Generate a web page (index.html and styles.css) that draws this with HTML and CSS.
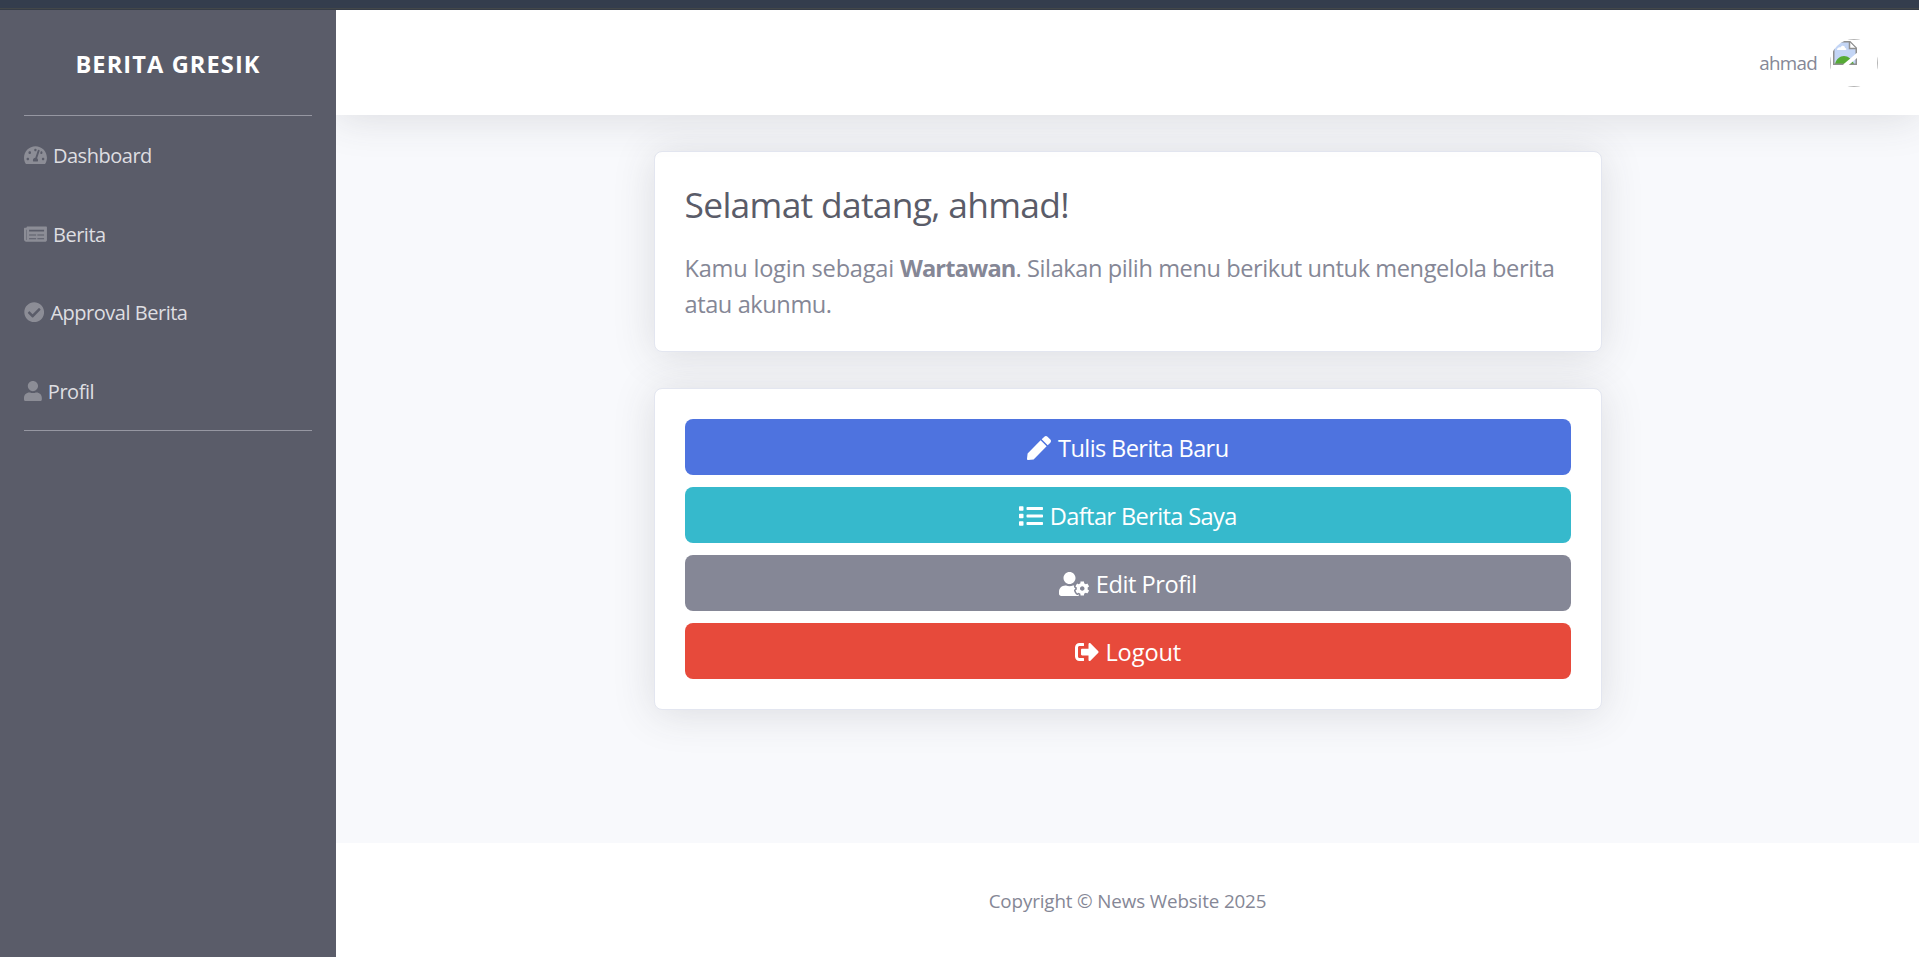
FILE: index.html
```html
<!DOCTYPE html>
<html lang="id">
<head>
<meta charset="utf-8">
<title>Berita Gresik</title>
<link rel="stylesheet" href="styles.css">
</head>
<body>
<div class="window-edge"></div>
<div class="wrapper">
  <aside class="sidebar">
    <a class="brand">BERITA GRESIK</a>
    <hr class="divider">
    <nav class="nav">
      <a class="nav-link"><svg class="fa fa-576" viewBox="0 0 576 512"><path d="M288 32C128.94 32 0 160.94 0 320c0 52.8 14.25 102.26 39.06 144.8 5.61 9.62 16.3 15.2 27.44 15.2h443c11.14 0 21.83-5.58 27.44-15.2C561.75 422.26 576 372.8 576 320c0-159.06-128.94-288-288-288zm0 64c14.71 0 26.58 10.13 30.32 23.65-1.11 2.26-2.64 4.23-3.45 6.67l-9.22 27.67c-5.13 3.49-10.97 6.01-17.64 6.01-17.67 0-32-14.33-32-32S270.33 96 288 96zM96 384c-17.67 0-32-14.33-32-32s14.33-32 32-32 32 14.33 32 32-14.33 32-32 32zm48-160c-17.67 0-32-14.33-32-32s14.33-32 32-32 32 14.33 32 32-14.33 32-32 32zm246.77-72.41l-61.33 184C343.13 347.33 352 364.54 352 384c0 11.72-3.38 22.55-8.88 32H232.88c-5.5-9.45-8.88-20.28-8.88-32 0-33.94 26.5-61.43 59.9-63.59l61.34-184.01c4.17-12.56 17.73-19.45 30.36-15.17 12.57 4.19 19.35 17.79 15.17 30.36zm14.66 57.2l15.52-46.55c3.47-1.29 7.13-2.23 11.05-2.23 17.67 0 32 14.33 32 32s-14.33 32-32 32c-11.38-.01-20.89-6.28-26.57-15.22zM480 384c-17.67 0-32-14.33-32-32s14.33-32 32-32 32 14.33 32 32-14.33 32-32 32z"/></svg><span>Dashboard</span></a>
      <a class="nav-link"><svg class="fa fa-576" viewBox="0 0 576 512"><path fill-rule="evenodd" d="M552 64H88c-13.255 0-24 10.745-24 24v8H24c-13.255 0-24 10.745-24 24v272c0 30.928 25.072 56 56 56h472c26.510 0 48-21.490 48-48V88c0-13.255-10.745-24-24-24zM52 400V144h12v256zM128 142h376v46H128zM128 264h176v24H128zM336 264h168v24H336zM128 356h176v24H128zM336 356h168v24H336z"/></svg><span>Berita</span></a>
      <a class="nav-link"><svg class="fa" viewBox="0 0 512 512"><path d="M504 256c0 136.967-111.033 248-248 248S8 392.967 8 256 119.033 8 256 8s248 111.033 248 248zM227.314 387.314l184-184c6.248-6.248 6.248-16.379 0-22.627l-22.627-22.627c-6.248-6.249-16.379-6.249-22.628 0L216 308.118l-70.059-70.059c-6.248-6.248-16.379-6.248-22.628 0l-22.627 22.627c-6.248 6.248-6.248 16.379 0 22.627l104 104c6.249 6.249 16.379 6.249 22.628.001z"/></svg><span>Approval Berita</span></a>
      <a class="nav-link"><svg class="fa fa-448" viewBox="0 0 448 512"><path d="M224 256c70.7 0 128-57.3 128-128S294.7 0 224 0 96 57.3 96 128s57.3 128 128 128zm89.6 32h-16.7c-22.2 10.2-46.9 16-72.9 16s-50.6-5.8-72.9-16h-16.7C60.2 288 0 348.2 0 422.4V464c0 26.5 21.5 48 48 48h352c26.5 0 48-21.5 48-48v-41.6c0-74.2-60.2-134.4-134.4-134.4z"/></svg><span>Profil</span></a>
    </nav>
    <hr class="divider">
  </aside>
  <div class="content">
    <header class="topbar">
      <span class="user-name">ahmad</span>
      <span class="avatar"><span class="avatar-frame"><svg class="broken" viewBox="0 0 24 24"><path d="M.75.75H17L23.250 7v16.250H.75z" fill="#c3d5f5"/><path d="M4 9c0-2 2-3 3.500-2.500C8.500 4 12 4.500 12 7c1.500 0 2 2 .5 2z" fill="#fff"/><path d="M2 23c1-5 5-8 9-8s8 3 10 8z" fill="#55aa35"/><path d="M.75.75H17L23.250 7v16.250H.75z" fill="none" stroke="#8f8f8f" stroke-width="1.500"/><path d="M16.500 1v6.500H23" fill="#fff" stroke="#8f8f8f" stroke-width="1.500"/><path d="M11.500 25L25 13.500" stroke="#fff" stroke-width="4"/></svg></span></span>
    </header>
    <main class="main">
      <section class="card">
        <h1 class="title">Selamat datang, ahmad!</h1>
        <p class="lead"><span class="intro">Kamu login sebagai </span><strong>Wartawan</strong>. Silakan pilih menu berikut untuk mengelola berita atau akunmu.</p>
      </section>
      <section class="card actions">
        <a class="btn primary"><svg class="fa" viewBox="0 0 512 512"><path d="M290.74 93.24l128.02 128.02-277.99 277.99-114.14 12.6C11.35 513.54-1.56 500.62.14 485.34l12.7-114.22 277.9-277.88zm207.2-19.06l-60.11-60.11c-18.75-18.75-49.16-18.75-67.91 0l-56.55 56.55 128.02 128.02 56.55-56.55c18.75-18.76 18.75-49.16 0-67.91z"/></svg><span>Tulis Berita Baru</span></a>
        <a class="btn info"><svg class="fa" viewBox="0 0 512 512"><path d="M80 368H16a16 16 0 0 0-16 16v64a16 16 0 0 0 16 16h64a16 16 0 0 0 16-16v-64a16 16 0 0 0-16-16zm0-320H16A16 16 0 0 0 0 64v64a16 16 0 0 0 16 16h64a16 16 0 0 0 16-16V64a16 16 0 0 0-16-16zm0 160H16a16 16 0 0 0-16 16v64a16 16 0 0 0 16 16h64a16 16 0 0 0 16-16v-64a16 16 0 0 0-16-16zm416 176H176a16 16 0 0 0-16 16v32a16 16 0 0 0 16 16h320a16 16 0 0 0 16-16v-32a16 16 0 0 0-16-16zm0-320H176a16 16 0 0 0-16 16v32a16 16 0 0 0 16 16h320a16 16 0 0 0 16-16V80a16 16 0 0 0-16-16zm0 160H176a16 16 0 0 0-16 16v32a16 16 0 0 0 16 16h320a16 16 0 0 0 16-16v-32a16 16 0 0 0-16-16z"/></svg><span>Daftar Berita Saya</span></a>
        <a class="btn secondary"><svg class="fa fa-640" viewBox="0 0 640 512"><path d="M610.5 373.3c2.600-14.100 2.600-28.500 0-42.600l25.800-14.900c3-1.700 4.300-5.200 3.300-8.500-6.700-21.600-18.200-41.200-33.200-57.400-2.300-2.500-6-3.100-9-1.400l-25.800 14.900c-10.900-9.300-23.400-16.500-36.900-21.300v-29.800c0-3.400-2.400-6.400-5.700-7.100-22.300-5-45-4.800-66.200 0-3.300.7-5.700 3.700-5.700 7.100v29.800c-13.500 4.800-26 12-36.900 21.300l-25.800-14.900c-2.900-1.700-6.700-1.100-9 1.400-15 16.200-26.500 35.800-33.200 57.400-1 3.300.4 6.800 3.300 8.500l25.800 14.900c-2.600 14.100-2.600 28.500 0 42.600l-25.800 14.900c-3 1.700-4.300 5.200-3.300 8.500 6.700 21.600 18.200 41.100 33.200 57.400 2.300 2.500 6 3.100 9 1.400l25.800-14.900c10.900 9.300 23.400 16.500 36.900 21.300v29.800c0 3.400 2.400 6.400 5.700 7.100 22.300 5 45 4.800 66.200 0 3.300-.7 5.700-3.700 5.700-7.100v-29.800c13.500-4.800 26-12 36.900-21.300l25.800 14.900c2.900 1.700 6.700 1.100 9-1.400 15-16.200 26.500-35.800 33.200-57.400 1-3.300-.4-6.800-3.300-8.500l-25.800-14.900zM496 400.500c-26.800 0-48.500-21.800-48.500-48.500s21.800-48.500 48.500-48.500 48.500 21.800 48.500 48.500-21.700 48.500-48.500 48.500zM224 256c70.700 0 128-57.300 128-128S294.700 0 224 0 96 57.300 96 128s57.300 128 128 128zm201.200 226.500c-2.300-1.200-4.600-2.600-6.800-3.900l-7.900 4.600c-6 3.400-12.800 5.300-19.600 5.300-10.900 0-21.400-4.600-28.900-12.600-18.300-19.800-32.300-43.900-40.200-69.600-5.500-17.700 1.900-36.400 17.900-45.700l7.900-4.600c-.1-2.600-.1-5.200 0-7.800l-7.900-4.600c-16-9.200-23.400-28-17.900-45.700.9-2.900 2.200-5.800 3.200-8.700-3.800-.3-7.500-1.200-11.400-1.200h-16.700c-22.200 10.200-46.900 16-72.900 16s-50.600-5.800-72.900-16h-16.700C60.200 288 0 348.200 0 422.400V464c0 26.500 21.500 48 48 48h352c10.100 0 19.500-3.200 27.200-8.500-1.200-3.800-2-7.700-2-11.800v-9.200z"/></svg><span>Edit Profil</span></a>
        <a class="btn danger"><svg class="fa" viewBox="0 0 512 512"><path d="M497 273L329 441c-15 15-41 4.500-41-17v-96H152c-13.300 0-24-10.700-24-24v-96c0-13.300 10.700-24 24-24h136V88c0-21.400 25.900-32 41-17l168 168c9.300 9.400 9.300 24.600 0 34zM192 436v-40c0-6.600-5.400-12-12-12H96c-17.700 0-32-14.300-32-32V160c0-17.700 14.300-32 32-32h84c6.600 0 12-5.400 12-12V76c0-6.600-5.400-12-12-12H96c-53 0-96 43-96 96v192c0 53 43 96 96 96h84c6.600 0 12-5.400 12-12z"/></svg><span>Logout</span></a>
      </section>
    </main>
    <footer class="footer">Copyright © News Website 2025</footer>
  </div>
</div>
</body>
</html>
```
FILE: styles.css
```css
* { box-sizing: border-box; }
body {
  margin: 0;
  height: 957px;
  display: flex;
  flex-direction: column;
  overflow: hidden;
  font-family: "Open Sans", "Noto Sans", sans-serif;
  font-size: 23.6px;
  line-height: 36px;
  color: #858796;
  background: #f8f9fc;
}
.window-edge {
  flex: none;
  height: 10px;
  background: #343d4d;
  border-bottom: 1px solid #363c46;
  box-shadow: inset 0 -1px #434749;
}
.wrapper { flex: 1; display: flex; min-height: 0; }
.sidebar { flex: none; width: 336px; background: #5a5c69; }
.brand {
  height: 105px;
  display: flex;
  align-items: center;
  justify-content: center;
  padding-top: 3px;
  color: #fff;
  font-size: 23.6px;
  font-weight: 700;
  letter-spacing: 1.1px;
}
.divider { margin: 0 24px; border: 0; height: 1px; background: #9697a2; }
.nav-link {
  display: flex;
  align-items: center;
  height: 78.6px;
  padding: 0 24px;
  gap: 6px;
  font-size: 20px;
  letter-spacing: -.48px;
  color: #dedee1;
}
.nav-link span { padding-top: 2px; }
.fa { width: 1em; height: 1em; fill: currentColor; flex: none; }
.fa-448 { width: .875em; }
.fa-576 { width: 1.125em; }
.fa-640 { width: 1.25em; }
.nav-link .fa { font-size: 20.4px; color: #8c8d96; }
.content { flex: 1; display: flex; flex-direction: column; min-width: 0; overflow: hidden; }
.topbar {
  position: relative;
  flex: none;
  height: 105px;
  display: flex;
  align-items: center;
  justify-content: flex-end;
  gap: 13px;
  padding-right: 41px;
  background: #fff;
  box-shadow: 0 3.6px 42px rgba(58, 59, 69, .15);
}
.user-name { font-size: 18.8px; letter-spacing: -.7px; padding-top: 1px; }
.avatar { width: 48px; height: 48px; border-radius: 50%; overflow: hidden; }
.avatar-frame { display: flex; width: 48px; height: 48px; border: 1px solid #b4b4b4; padding: 1px 2px; }
.broken { width: 24px; height: 24px; }
.main { flex: 1; display: flex; flex-direction: column; align-items: center; gap: 36px; padding-top: 36px; }
.card {
  width: 948px;
  padding: 30px;
  border: 1px solid #e3e6f0;
  border-radius: 8px;
  background: #fff;
  box-shadow: 0 3.6px 42px rgba(58, 59, 69, .15);
}
.title {
  margin: 0 0 24px;
  padding-top: 1px;
  font-size: 35.4px;
  line-height: 43px;
  font-weight: 400;
  letter-spacing: -.7px;
  color: #5a5c69;
}
.lead { margin: 0 0 -1px; letter-spacing: -.42px; }
.intro { letter-spacing: -.22px; }
.lead strong { letter-spacing: -.82px; }
.actions { display: flex; flex-direction: column; gap: 12px; }
.btn {
  height: 56px;
  display: flex;
  align-items: center;
  justify-content: center;
  gap: 6.6px;
  padding: 2px 0 0 1px;
  border-radius: 8px;
  letter-spacing: -.62px;
  color: #fff;
}
.btn .fa { font-size: 24px; }
.primary { background: #4e73df; }
.info { background: #36b9cc; }
.secondary { background: #858796; letter-spacing: -.45px; }
.danger { background: #e74a3b; letter-spacing: -.1px; }
.footer {
  flex: none;
  height: 114px;
  display: flex;
  align-items: center;
  justify-content: center;
  padding-top: 1px;
  background: #fff;
  font-size: 18.8px;
  letter-spacing: -.13px;
}
```
